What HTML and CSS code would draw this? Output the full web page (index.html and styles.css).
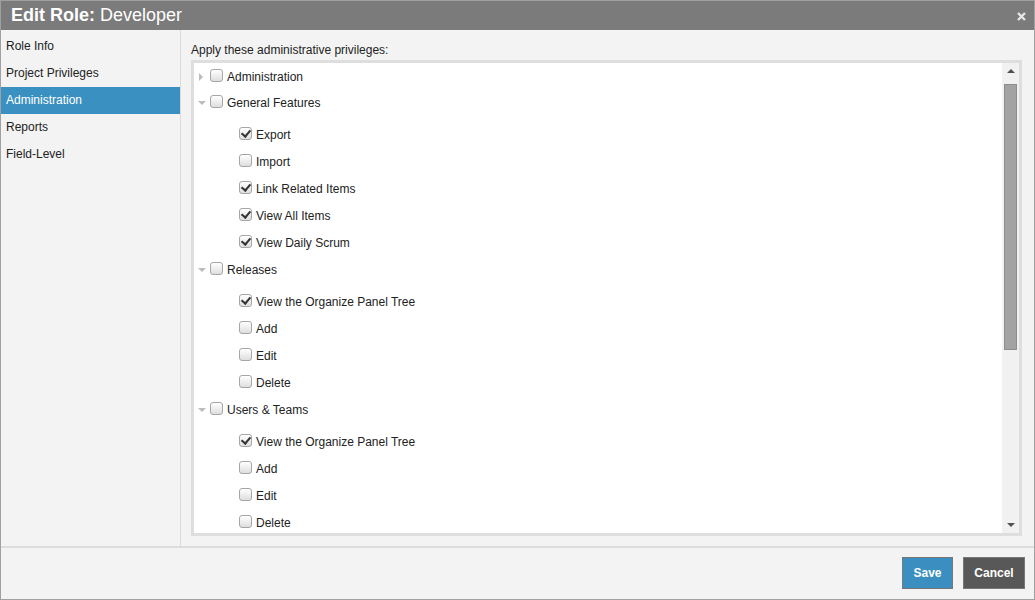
FILE: index.html
```html
<!DOCTYPE html>
<html lang="en">
<head>
    <meta charset="UTF-8">
    <title>Edit Role: Developer</title>
    <link rel="stylesheet" href="styles.css">
</head>
<body>
    <div class="dialog">
        <div class="titlebar">
            <h1><b>Edit Role:</b> Developer</h1>
            <svg class="close" width="9" height="9" viewBox="0 0 9 9"><path d="M1 1L8 8M8 1L1 8" stroke="#e6e6e6" stroke-width="2.4"/></svg>
        </div>

        <div class="main">
            <ul class="sidebar">
                <li>Role Info</li>
                <li>Project Privileges</li>
                <li class="active">Administration</li>
                <li>Reports</li>
                <li>Field-Level</li>
            </ul>

            <div class="content">
                <div class="label">Apply these administrative privileges:</div>
                <div class="tree-box">
                    <ul class="tree">
                        <li>
                            <div class="node"><span class="arrow closed"></span><span class="cb"></span>Administration</div>
                        </li>
                        <li>
                            <div class="node"><span class="arrow open"></span><span class="cb"></span>General Features</div>
                            <ul class="children">
                                <li class="node"><span class="cb on"></span>Export</li>
                                <li class="node"><span class="cb"></span>Import</li>
                                <li class="node"><span class="cb on"></span>Link Related Items</li>
                                <li class="node"><span class="cb on"></span>View All Items</li>
                                <li class="node"><span class="cb on"></span>View Daily Scrum</li>
                            </ul>
                        </li>
                        <li>
                            <div class="node"><span class="arrow open"></span><span class="cb"></span>Releases</div>
                            <ul class="children">
                                <li class="node"><span class="cb on"></span>View the Organize Panel Tree</li>
                                <li class="node"><span class="cb"></span>Add</li>
                                <li class="node"><span class="cb"></span>Edit</li>
                                <li class="node"><span class="cb"></span>Delete</li>
                            </ul>
                        </li>
                        <li>
                            <div class="node"><span class="arrow open"></span><span class="cb"></span>Users &amp; Teams</div>
                            <ul class="children">
                                <li class="node"><span class="cb on"></span>View the Organize Panel Tree</li>
                                <li class="node"><span class="cb"></span>Add</li>
                                <li class="node"><span class="cb"></span>Edit</li>
                                <li class="node"><span class="cb"></span>Delete</li>
                            </ul>
                        </li>
                    </ul>
                    <div class="scrollbar">
                        <span class="sb-up"></span>
                        <div class="sb-track"><div class="sb-thumb"></div></div>
                        <span class="sb-down"></span>
                    </div>
                </div>
            </div>
        </div>

        <div class="footer">
            <button class="btn save">Save</button>
            <button class="btn cancel">Cancel</button>
        </div>
    </div>
</body>
</html>
```

FILE: styles.css
```css
* {
    margin: 0;
    padding: 0;
    box-sizing: border-box;
}

body {
    font-family: 'Liberation Sans', Arial, sans-serif;
    font-size: 12px;
    color: #222;
    background: #fff;
}

ul {
    list-style: none;
}

.dialog {
    width: 1035px;
    height: 600px;
    border: 1px solid #a0a0a0;
    background: #f3f3f3;
    display: flex;
    flex-direction: column;
}

.titlebar {
    height: 29px;
    background: #7b7b7b;
    display: flex;
    align-items: center;
    justify-content: space-between;
    padding: 0 8px 0 10px;
    color: #fff;
}

.titlebar h1 {
    font-size: 18px;
    font-weight: normal;
    line-height: 29px;
}

.close {
    margin-top: 1px;
}

.main {
    flex: 1;
    display: flex;
    min-height: 0;
}

.sidebar {
    width: 180px;
    border-right: 1px solid #dcdcdc;
    padding-top: 3px;
}

.sidebar li {
    height: 27px;
    line-height: 27px;
    padding-left: 5px;
}

.sidebar li.active {
    background: #3a90c0;
    color: #fff;
}

.content {
    flex: 1;
    padding: 13px 12px 10px 10px;
    display: flex;
    flex-direction: column;
}

.label {
    line-height: 14px;
    margin-bottom: 3px;
}

.tree-box {
    flex: 1;
    border: 3px solid #dedede;
    background: #fff;
    display: flex;
    min-height: 0;
}

.tree {
    flex: 1;
    overflow: hidden;
    padding: 1px 0 0 4px;
}

.node {
    height: 26px;
    display: flex;
    align-items: center;
}

.children {
    margin: 5px 0 1px;
    padding-left: 41px;
}

.children .node {
    height: 27px;
}

.arrow {
    width: 12px;
    height: 8px;
    position: relative;
}

.arrow.closed::before {
    content: "";
    position: absolute;
    left: 1px;
    top: 0;
    border-left: 4px solid #bcbcbc;
    border-top: 4px solid transparent;
    border-bottom: 4px solid transparent;
}

.arrow.open::before {
    content: "";
    position: absolute;
    left: 0;
    top: 2px;
    border-top: 4px solid #bcbcbc;
    border-left: 4px solid transparent;
    border-right: 4px solid transparent;
}

.cb {
    width: 13px;
    height: 13px;
    border: 1px solid #a6a6a6;
    border-radius: 3px;
    background: linear-gradient(#ffffff, #dedede);
    margin-right: 4px;
    margin-top: -3px;
    position: relative;
}

.cb.on::after {
    content: "";
    position: absolute;
    left: 3px;
    top: 0;
    width: 4px;
    height: 7px;
    border-right: 2px solid #333;
    border-bottom: 2px solid #333;
    transform: rotate(40deg);
}

.scrollbar {
    width: 17px;
    background: #f1f1f1;
    display: flex;
    flex-direction: column;
    align-items: center;
}

.sb-up,
.sb-down {
    height: 17px;
    width: 17px;
    position: relative;
}

.sb-up::before {
    content: "";
    position: absolute;
    left: 5px;
    top: 6px;
    border-bottom: 4px solid #505050;
    border-left: 4px solid transparent;
    border-right: 4px solid transparent;
}

.sb-down::before {
    content: "";
    position: absolute;
    left: 5px;
    top: 7px;
    border-top: 4px solid #505050;
    border-left: 4px solid transparent;
    border-right: 4px solid transparent;
}

.sb-track {
    flex: 1;
    width: 100%;
    padding: 4px 2px 0;
}

.sb-thumb {
    height: 266px;
    background: #a3a3a3;
    border: 1px solid #8e8e8e;
}

.footer {
    height: 53px;
    border-top: 2px solid #dcdcdc;
    display: flex;
    justify-content: flex-end;
    align-items: flex-start;
    gap: 10px;
    padding: 9px 9px 0 0;
}

.btn {
    height: 32px;
    border: 1px solid #777;
    color: #fff;
    font-family: 'Liberation Sans', Arial, sans-serif;
    font-size: 12px;
    font-weight: bold;
    cursor: pointer;
}

.save {
    width: 51px;
    background: #3a8fc0;
}

.cancel {
    width: 62px;
    background: #585858;
}
```
